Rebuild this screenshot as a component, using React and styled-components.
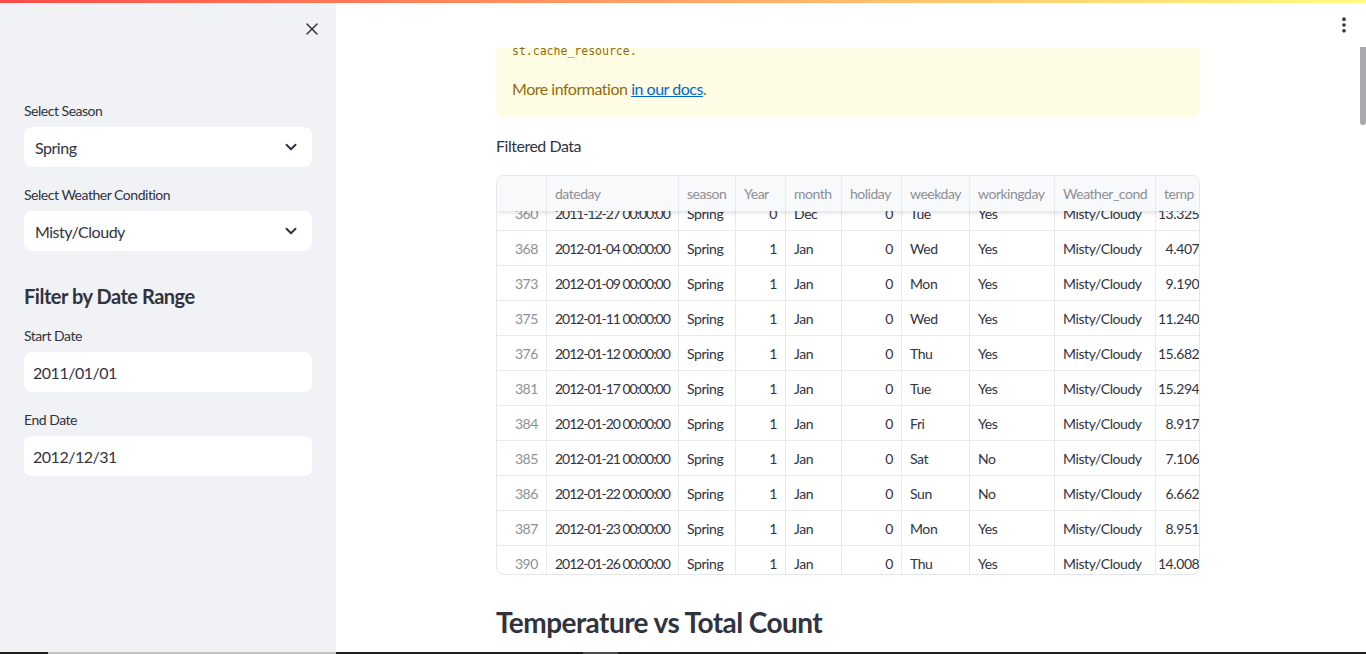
import React from 'react';
import styled, { createGlobalStyle } from 'styled-components';
import { X, ChevronDown, EllipsisVertical } from 'lucide-react';

const GlobalStyle = createGlobalStyle`
    html, body { margin:0; padding:0; height:100%; overflow:hidden; }
    body { font-family: Lato, "Noto Sans", sans-serif; color:#31333f; background:#fff; letter-spacing:-0.03em; }
    #root { height:100%; }
    * { box-sizing:border-box; }
`

const rows = [
    ['360','2011-12-27 00:00:00','Spring','0','Dec','0','Tue','Yes','Misty/Cloudy','13.3250'],
    ['368','2012-01-04 00:00:00','Spring','1','Jan','0','Wed','Yes','Misty/Cloudy','4.4075'],
    ['373','2012-01-09 00:00:00','Spring','1','Jan','0','Mon','Yes','Misty/Cloudy','9.1900'],
    ['375','2012-01-11 00:00:00','Spring','1','Jan','0','Wed','Yes','Misty/Cloudy','11.2400'],
    ['376','2012-01-12 00:00:00','Spring','1','Jan','0','Thu','Yes','Misty/Cloudy','15.6825'],
    ['381','2012-01-17 00:00:00','Spring','1','Jan','0','Tue','Yes','Misty/Cloudy','15.2942'],
    ['384','2012-01-20 00:00:00','Spring','1','Jan','0','Fri','Yes','Misty/Cloudy','8.9175'],
    ['385','2012-01-21 00:00:00','Spring','1','Jan','0','Sat','No','Misty/Cloudy','7.1067'],
    ['386','2012-01-22 00:00:00','Spring','1','Jan','0','Sun','No','Misty/Cloudy','6.6625'],
    ['387','2012-01-23 00:00:00','Spring','1','Jan','0','Mon','Yes','Misty/Cloudy','8.9517'],
    ['390','2012-01-26 00:00:00','Spring','1','Jan','0','Thu','Yes','Misty/Cloudy','14.0083'],
]

const cols = [
    { name:'', right:true, index:true },
    { name:'dateday', tight:true },
    { name:'season' },
    { name:'Year', right:true },
    { name:'month' },
    { name:'holiday', right:true },
    { name:'weekday' },
    { name:'workingday' },
    { name:'Weather_cond' },
    { name:'temp', right:true },
]

const gridCols = '50px 132px 57px 50px 56px 60px 68px 85px 101px 60px'

const App = () => {
    return (
        <>
            <GlobalStyle />
            <Decoration />
            <Page>
                <Sidebar>
                    <SideTop>
                        <CloseBtn><X size={20} strokeWidth={1.8} /></CloseBtn>
                    </SideTop>
                    <SideContent>
                        <Widget>
                            <Label>Select Season</Label>
                            <SelectBox>
                                <span>Spring</span>
                                <ChevronDown size={18} strokeWidth={2.6} />
                            </SelectBox>
                        </Widget>
                        <Widget>
                            <Label>Select Weather Condition</Label>
                            <SelectBox>
                                <span>Misty/Cloudy</span>
                                <ChevronDown size={18} strokeWidth={2.6} />
                            </SelectBox>
                        </Widget>
                        <SideHeading>Filter by Date Range</SideHeading>
                        <Widget>
                            <Label>Start Date</Label>
                            <DateBox>2011/01/01</DateBox>
                        </Widget>
                        <Widget>
                            <Label>End Date</Label>
                            <DateBox>2012/12/31</DateBox>
                        </Widget>
                    </SideContent>
                </Sidebar>

                <Main>
                    <Header>
                        <MenuBtn><EllipsisVertical size={20} strokeWidth={2.4} /></MenuBtn>
                    </Header>
                    <Body>
                        <Column>
                            <Alert>
                                <CodeLine>st.cache_resource.</CodeLine>
                                <AlertText>More information <a href="#docs">in our docs</a>.</AlertText>
                            </Alert>
                            <Para>Filtered Data</Para>
                            <Table>
                                <HeadRow>
                                    {cols.map((c, i) => (
                                        <HeadCell key={i}>{c.name}</HeadCell>
                                    ))}
                                </HeadRow>
                                <TableBody>
                                    <Rows>
                                        {rows.map((r, ri) => (
                                            <Row key={ri}>
                                                {r.map((v, ci) => (
                                                    <Cell
                                                        key={ci}
                                                        right={cols[ci].right ? 1 : 0}
                                                        index={cols[ci].index ? 1 : 0}
                                                        tight={cols[ci].tight ? 1 : 0}
                                                    >{v}</Cell>
                                                ))}
                                            </Row>
                                        ))}
                                    </Rows>
                                </TableBody>
                            </Table>
                            <SubHeader>Temperature vs Total Count</SubHeader>
                        </Column>
                    </Body>
                    <ScrollThumb />
                </Main>
            </Page>
            <BottomStrip>
                <StripPart w="48px" c="#1e1e1e" />
                <StripPart w="288px" c="#c4c4c4" />
                <StripPart w="247px" c="#1e1e1e" />
                <StripPart w="35px" c="#4a4a4a" />
                <StripPart w="748px" c="#1e1e1e" />
            </BottomStrip>
        </>
    )
}

export default App

const Decoration = styled.div`
    position:fixed;
    top:0; left:0; right:0;
    height:3px;
    z-index:10;
    background:linear-gradient(90deg, rgb(255,75,75), rgb(255,253,128));
`

const Page = styled.div`
    display:flex;
    height:100vh;
`

const Sidebar = styled.aside`
    width:336px;
    flex-shrink:0;
    background:#f0f2f6;
    display:flex;
    flex-direction:column;
`

const SideTop = styled.div`
    height:54px;
    display:flex;
    align-items:center;
    justify-content:flex-end;
    padding:3px 12px 0 0;
`

const CloseBtn = styled.div`
    width:24px;
    height:24px;
    display:flex;
    align-items:center;
    justify-content:center;
    color:#31333f;
`

const SideContent = styled.div`
    padding:45px 24px 0 24px;
    display:flex;
    flex-direction:column;
    gap:16px;
`

const Widget = styled.div`
    display:flex;
    flex-direction:column;
    gap:4px;
`

const Label = styled.div`
    height:24px;
    line-height:24px;
    font-size:14px;
    color:#31333f;
`

const SelectBox = styled.div`
    height:40px;
    background:#fff;
    border-radius:8px;
    display:flex;
    align-items:center;
    justify-content:space-between;
    padding:0 12px 0 11px;
    font-size:16px;
    color:#31333f;
`

const DateBox = styled.div`
    height:40px;
    background:#fff;
    border-radius:8px;
    display:flex;
    align-items:center;
    padding:0 9px;
    font-size:16px;
    color:#31333f;
`

const SideHeading = styled.h2`
    margin:0;
    padding-top:17px;
    font-size:20px;
    line-height:24px;
    font-weight:700;
    color:#31333f;
`

const Main = styled.main`
    flex:1;
    display:flex;
    flex-direction:column;
    position:relative;
    padding-right:6px;
    min-width:0;
`

const Header = styled.header`
    height:47px;
    flex-shrink:0;
    display:flex;
    align-items:center;
    justify-content:flex-end;
    padding-top:3px;
    background:#fff;
`

const MenuBtn = styled.div`
    width:32px;
    height:32px;
    display:flex;
    align-items:center;
    justify-content:center;
    color:#31333f;
`

const Body = styled.div`
    flex:1;
    overflow:hidden;
`

const Column = styled.div`
    width:704px;
    margin:0 auto;
    display:flex;
    flex-direction:column;
    gap:16px;
`

const Alert = styled.div`
    background:rgb(255,252,230);
    border-radius:0 0 8px 8px;
    padding:0 16px 15px 16px;
    color:rgb(146,108,5);
`

const CodeLine = styled.div`
    margin-top:-6px;
    margin-bottom:15px;
    height:20px;
    line-height:20px;
    font-family:"DejaVu Sans Mono", "Liberation Mono", monospace;
    font-size:11.5px;
    letter-spacing:0;
`

const AlertText = styled.p`
    margin:0;
    font-size:16px;
    line-height:26px;
    a { color:#0068c9; text-decoration:underline; }
`

const Para = styled.p`
    margin:0;
    font-size:16px;
    line-height:26px;
    color:#31333f;
`

const Table = styled.div`
    height:400px;
    border:1px solid #e6e7ea;
    border-radius:8px;
    overflow:hidden;
    display:flex;
    flex-direction:column;
    position:relative;
`

const HeadRow = styled.div`
    display:grid;
    grid-template-columns:${gridCols};
    height:35px;
    flex-shrink:0;
    background:#f8f9fb;
    box-shadow:0 2px 5px rgba(0,0,0,0.12);
    position:relative;
    z-index:2;
`

const HeadCell = styled.div`
    display:flex;
    align-items:center;
    padding:0 8px;
    font-size:14px;
    color:#8d8f97;
    border-right:1px solid #e8e9ed;
    white-space:nowrap;
    overflow:hidden;
`

const TableBody = styled.div`
    flex:1;
    overflow:hidden;
`

const Rows = styled.div`
    margin-top:-15px;
`

const Row = styled.div`
    display:grid;
    grid-template-columns:${gridCols};
    height:35px;
    border-bottom:1px solid #e8e9ed;
`

const Cell = styled.div`
    display:flex;
    align-items:center;
    justify-content:${p => p.right ? 'flex-end' : 'flex-start'};
    padding:0 ${p => p.tight ? '4px 0 8px' : '8px'};
    font-size:14px;
    letter-spacing:${p => p.tight ? '-0.075em' : '-0.03em'};
    color:${p => p.index ? '#8d8f97' : '#31333f'};
    border-right:1px solid #e8e9ed;
    white-space:nowrap;
    overflow:hidden;
`

const SubHeader = styled.h3`
    margin:13px 0 0 0;
    font-size:28px;
    line-height:36px;
    font-weight:700;
    letter-spacing:-0.02em;
    color:#31333f;
`

const ScrollThumb = styled.div`
    position:absolute;
    right:0;
    top:47px;
    width:6px;
    height:78px;
    border-radius:0 0 3px 3px;
    background:#a9a9ae;
`

const BottomStrip = styled.div`
    position:fixed;
    left:0; right:0; bottom:0;
    height:2px;
    display:flex;
    background:#1e1e1e;
    z-index:10;
`

const StripPart = styled.div`
    width:${p => p.w};
    background:${p => p.c};
`
